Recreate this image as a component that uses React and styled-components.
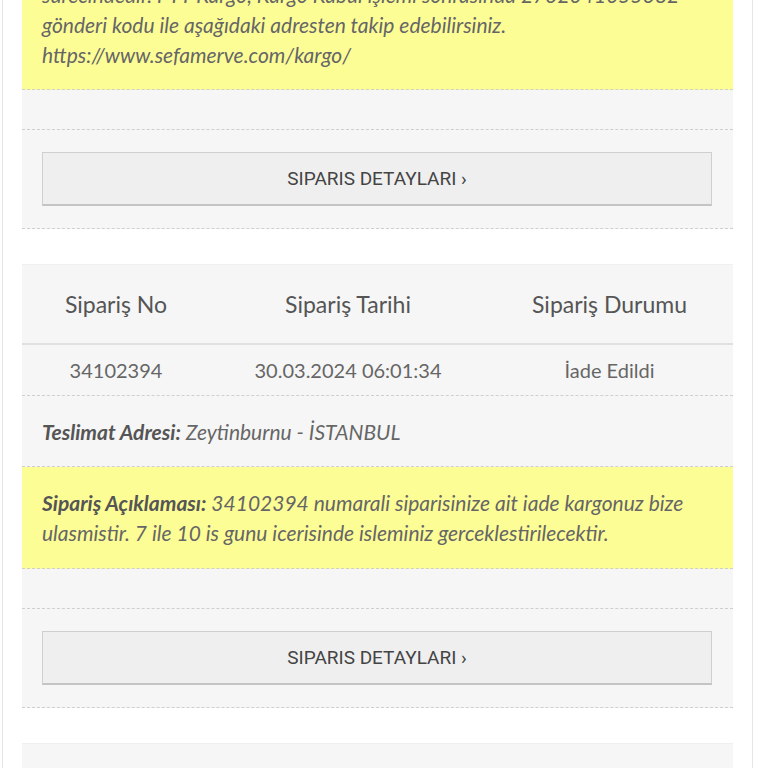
import React from "react";
import styled, { createGlobalStyle } from "styled-components";

const Global = createGlobalStyle`
  html, body { margin: 0; padding: 0; background: #fff; }
  body { font-family: "Lato", "Roboto", sans-serif; color: #666; overflow: hidden; }
  * { box-sizing: border-box; }
`;

const Frame = styled.div`
  width: 751px;
  margin-left: 2px;
  margin-top: -41px;
  border-left: 1px solid #e6e6e6;
  border-right: 1px solid #e6e6e6;
  padding: 0 19px;
  display: flex;
  flex-direction: column;
  gap: 35px;
`;

const Card = styled.section`
  background: #f6f6f6;
  border-top: 1px solid #efefef;
  display: flex;
  flex-direction: column;
`;

const Row = styled.div`
  border-bottom: 1px dashed #cfcfcf;
  min-height: ${(p) => p.$h || 0}px;
`;

const Note = styled(Row)`
  background: #fdfd96;
  padding: ${(p) => (p.$first ? "20px 20px 19px" : "21px 20px 20px")};
  font-size: 21px;
  line-height: 30px;
  font-style: italic;
  color: #666;
  white-space: nowrap;
`;

const Bold = styled.b`
  font-weight: 700;
  color: #555;
`;

const Grid = styled.div`
  display: grid;
  grid-template-columns: 188px 276px 1fr;
  align-items: center;
  text-align: center;
  height: ${(p) => p.$h}px;
  border-bottom: ${(p) => p.$border};
`;

const Head = styled.div`
  font-size: 23px;
  color: #555;
`;

const Cell = styled.div`
  font-size: 20px;
  color: #666;
`;

const Address = styled(Row)`
  height: 71px;
  display: flex;
  align-items: center;
  padding: 0 20px;
  font-size: 21px;
  font-style: italic;
  color: #666;
`;

const ButtonRow = styled(Row)`
  padding: 22px 21px 22px 20px;
`;

const DetailButton = styled.button`
  display: block;
  width: 100%;
  height: 54px;
  background: #efefef;
  border: 1px solid #cfcfcf;
  border-bottom: 2px solid #c4c4c4;
  font-family: "Roboto", "Lato", sans-serif;
  font-size: 19px;
  color: #444;
  cursor: pointer;
`;

function Buttons() {
  return (
    <>
      <Row $h={40} />
      <ButtonRow>
        <DetailButton>SIPARIS DETAYLARI ›</DetailButton>
      </ButtonRow>
    </>
  );
}

export default function App() {
  return (
    <>
      <Global />
      <Frame>
        <Card>
          <Note $first>
            sürecindedir. PTT Kargo, Kargo Kabul işlemi sonrasında 2732041055382
            <br />
            gönderi kodu ile aşağıdaki adresten takip edebilirsiniz.
            <br />
            https://www.sefamerve.com/kargo/
          </Note>
          <Buttons />
        </Card>
        <Card>
          <Grid $h={80} $border="2px solid #e0e0e0">
            <Head>Sipariş No</Head>
            <Head>Sipariş Tarihi</Head>
            <Head>Sipariş Durumu</Head>
          </Grid>
          <Grid $h={51} $border="1px dashed #cfcfcf">
            <Cell>34102394</Cell>
            <Cell>30.03.2024 06:01:34</Cell>
            <Cell>İade Edildi</Cell>
          </Grid>
          <Address>
            <Bold>Teslimat Adresi:</Bold>&nbsp;Zeytinburnu - İSTANBUL
          </Address>
          <Note>
            <Bold>Sipariş Açıklaması:</Bold> 34102394 numarali siparisinize ait iade kargonuz bize
            <br />
            ulasmistir. 7 ile 10 is gunu icerisinde isleminiz gerceklestirilecektir.
          </Note>
          <Buttons />
        </Card>
        <Card>
          <Row $h={120} />
        </Card>
      </Frame>
    </>
  );
}
